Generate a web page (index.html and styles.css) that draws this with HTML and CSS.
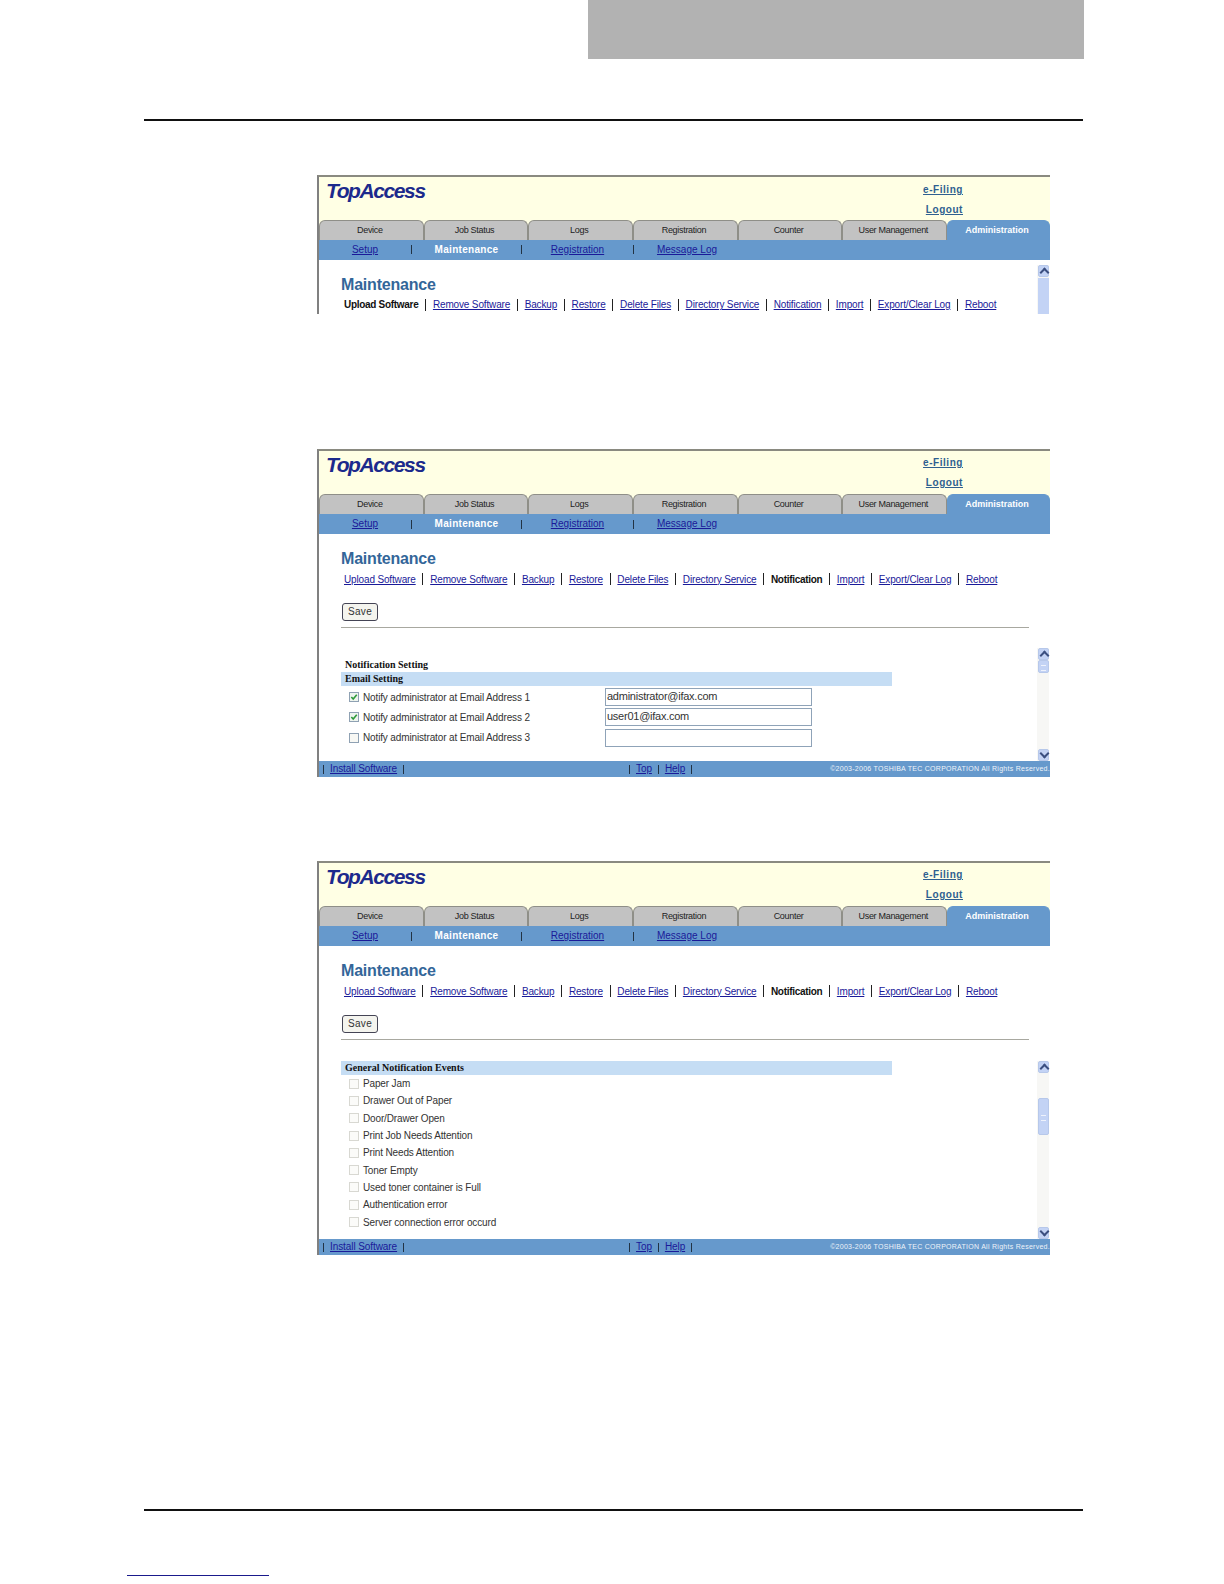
FILE: index.html
```html
<!DOCTYPE html>
<html lang="en">
<head>
<meta charset="utf-8">
<title>TopAccess Maintenance</title>
<link rel="stylesheet" href="styles.css">
</head>
<body>
<div class="page-tab"></div>
<div class="rule rule-top"></div>

<section class="screen screen-a">
  <div class="hdr"><span class="logo">TopAccess</span><div class="hdr-links"><a>e-Filing</a><a>Logout</a></div></div>
  <div class="tabs"><span class="tab">Device</span><span class="tab">Job Status</span><span class="tab">Logs</span><span class="tab">Registration</span><span class="tab">Counter</span><span class="tab">User Management</span><span class="tab tab-on">Administration</span></div>
  <div class="subnav"><a class="c1">Setup</a><i></i><b class="c2">Maintenance</b><i></i><a class="c3">Registration</a><i></i><a class="c4">Message Log</a></div>
  <div class="body body-clip">
    <div class="main">
      <h1>Maintenance</h1>
      <nav class="links"><b>Upload Software</b><i></i><a>Remove Software</a><i></i><a>Backup</a><i></i><a>Restore</a><i></i><a>Delete Files</a><i></i><a>Directory Service</a><i></i><a>Notification</a><i></i><a>Import</a><i></i><a>Export/Clear Log</a><i></i><a>Reboot</a></nav>
    </div>
    <div class="scroll scroll-a"><span class="sb up"></span><span class="track-fill"></span></div>
  </div>
</section>

<section class="screen screen-b">
  <div class="hdr"><span class="logo">TopAccess</span><div class="hdr-links"><a>e-Filing</a><a>Logout</a></div></div>
  <div class="tabs"><span class="tab">Device</span><span class="tab">Job Status</span><span class="tab">Logs</span><span class="tab">Registration</span><span class="tab">Counter</span><span class="tab">User Management</span><span class="tab tab-on">Administration</span></div>
  <div class="subnav"><a class="c1">Setup</a><i></i><b class="c2">Maintenance</b><i></i><a class="c3">Registration</a><i></i><a class="c4">Message Log</a></div>
  <div class="body">
    <div class="main">
      <h1>Maintenance</h1>
      <nav class="links links-alt"><a>Upload Software</a><i></i><a>Remove Software</a><i></i><a>Backup</a><i></i><a>Restore</a><i></i><a>Delete Files</a><i></i><a>Directory Service</a><i></i><b>Notification</b><i></i><a>Import</a><i></i><a>Export/Clear Log</a><i></i><a>Reboot</a></nav>
      <div class="save">Save</div>
      <div class="sep-line"></div>
    </div>
    <div class="pane pane-b">
      <div class="pane-main">
        <div class="caption">Notification Setting</div>
        <div class="band">Email Setting</div>
        <div class="row"><span class="cb on"><svg viewBox="0 0 9 9"><path d="M1.5 4.5 3.6 6.8 7.6 2"/></svg></span><span class="lbl">Notify administrator at Email Address 1</span><span class="field">administrator@ifax.com</span></div>
        <div class="row"><span class="cb on"><svg viewBox="0 0 9 9"><path d="M1.5 4.5 3.6 6.8 7.6 2"/></svg></span><span class="lbl">Notify administrator at Email Address 2</span><span class="field">user01@ifax.com</span></div>
        <div class="row"><span class="cb"></span><span class="lbl">Notify administrator at Email Address 3</span><span class="field"></span></div>
      </div>
      <div class="scroll"><span class="sb up"></span><span class="sb thumb thumb-b"></span><span class="spacer"></span><span class="sb down"></span></div>
    </div>
  </div>
  <div class="foot"><div><i></i><a>Install Software</a><i></i></div><div><i></i><a>Top</a><i></i><a>Help</a><i></i></div><div class="copy">©2003-2006 TOSHIBA TEC CORPORATION All Rights Reserved.</div></div>
</section>

<section class="screen screen-c">
  <div class="hdr"><span class="logo">TopAccess</span><div class="hdr-links"><a>e-Filing</a><a>Logout</a></div></div>
  <div class="tabs"><span class="tab">Device</span><span class="tab">Job Status</span><span class="tab">Logs</span><span class="tab">Registration</span><span class="tab">Counter</span><span class="tab">User Management</span><span class="tab tab-on">Administration</span></div>
  <div class="subnav"><a class="c1">Setup</a><i></i><b class="c2">Maintenance</b><i></i><a class="c3">Registration</a><i></i><a class="c4">Message Log</a></div>
  <div class="body">
    <div class="main">
      <h1>Maintenance</h1>
      <nav class="links links-alt"><a>Upload Software</a><i></i><a>Remove Software</a><i></i><a>Backup</a><i></i><a>Restore</a><i></i><a>Delete Files</a><i></i><a>Directory Service</a><i></i><b>Notification</b><i></i><a>Import</a><i></i><a>Export/Clear Log</a><i></i><a>Reboot</a></nav>
      <div class="save">Save</div>
      <div class="sep-line"></div>
    </div>
    <div class="pane pane-c">
      <div class="pane-main">
        <div class="band">General Notification Events</div>
        <div class="events">
          <div class="ev"><span class="cb dim"></span><span class="lbl">Paper Jam</span></div>
          <div class="ev"><span class="cb dim"></span><span class="lbl">Drawer Out of Paper</span></div>
          <div class="ev"><span class="cb dim"></span><span class="lbl">Door/Drawer Open</span></div>
          <div class="ev"><span class="cb dim"></span><span class="lbl">Print Job Needs Attention</span></div>
          <div class="ev"><span class="cb dim"></span><span class="lbl">Print Needs Attention</span></div>
          <div class="ev"><span class="cb dim"></span><span class="lbl">Toner Empty</span></div>
          <div class="ev"><span class="cb dim"></span><span class="lbl">Used toner container is Full</span></div>
          <div class="ev"><span class="cb dim"></span><span class="lbl">Authentication error</span></div>
          <div class="ev"><span class="cb dim"></span><span class="lbl">Server connection error occurd</span></div>
        </div>
      </div>
      <div class="scroll"><span class="sb up"></span><span class="spacer s1"></span><span class="sb thumb thumb-c"></span><span class="spacer"></span><span class="sb down"></span></div>
    </div>
  </div>
  <div class="foot"><div><i></i><a>Install Software</a><i></i></div><div><i></i><a>Top</a><i></i><a>Help</a><i></i></div><div class="copy">©2003-2006 TOSHIBA TEC CORPORATION All Rights Reserved.</div></div>
</section>

<div class="rule rule-bottom"></div>
<div class="foot-link"></div>
</body>
</html>
```
FILE: styles.css
```css
* { box-sizing: border-box; }
html, body { margin: 0; padding: 0; background: #fff; }
body { font-family: "Liberation Sans", Arial, sans-serif; font-size: 10px; color: #222; height: 1584px; overflow: hidden; }
a { color: #1a1a99; text-decoration: underline; }

.page-tab { margin-left: 588px; width: 496px; height: 59px; background: #b2b2b2; }
.rule { margin-left: 144px; width: 939px; height: 2px; background: #111; }
.rule-top { margin-top: 60px; }
.rule-bottom { margin-top: 254px; }
.foot-link { margin: 64px 0 0 127px; width: 142px; height: 1px; background: #1a1a8c; }

.screen { margin-left: 317px; width: 733px; border-top: 2px solid #8a8a80; border-left: 2px solid #808080; background: #fff; display: flex; flex-direction: column; }
.screen-a { margin-top: 54px; height: 139px; }
.screen-b { margin-top: 135px; height: 328px; }
.screen-c { margin-top: 84px; height: 394px; }

.hdr { height: 43px; background: #ffffe4; display: flex; justify-content: space-between; padding: 1px 0 0 7px; }
.logo { font: italic bold 21px/25px "Liberation Sans", Arial, sans-serif; letter-spacing: -1.4px; color: #1c2a8c; }
.hdr-links { width: 643px; display: flex; flex-direction: column; align-items: flex-end; padding: 5px 0 0; margin-right: 87px; gap: 6px; }
.screen-b .hdr-links, .screen-c .hdr-links { padding-top: 4px; }
.hdr-links a { color: #2f5f90; font-weight: bold; font-size: 10px; line-height: 14px; letter-spacing: .55px; }

.tabs { height: 20px; display: flex; background: #ffffe4; }
.tab { flex: 0 0 104.7px; height: 20px; background: #c2c2c2; border: 1px solid #8f8f88; border-bottom: 0; border-radius: 6px 6px 0 0; font-size: 9px; letter-spacing: -.3px; line-height: 18px; text-align: center; color: #222; padding-right: 3px; }
.tab-on { flex: 1 1 auto; background: #6699cc; border-color: #6699cc; color: #fff; font-weight: bold; letter-spacing: 0; }

.subnav { height: 20px; background: #6699cc; display: flex; align-items: center; line-height: 20px; }
.subnav i { flex: 0 0 1px; height: 9px; background: #234; }
.subnav a, .subnav b { text-align: center; }
.subnav b { color: #fff; letter-spacing: .3px; }
.c1 { flex: 0 0 92px; }
.c2 { flex: 0 0 109px; }
.c3 { flex: 0 0 111px; }
.c4 { flex: 0 0 106px; }

.body { flex: 1 1 auto; min-height: 0; display: flex; flex-direction: column; }
.body-clip { flex-direction: row; justify-content: space-between; overflow: hidden; }
.main { padding: 15px 0 0 22px; width: 710px; flex: none; }
h1 { margin: 0; font-size: 16px; letter-spacing: -.2px; line-height: 20px; font-weight: bold; color: #336699; }
.links { display: flex; align-items: center; height: 20px; gap: 6.75px; padding-left: 3px; white-space: nowrap; letter-spacing: -.15px; }
.links i { width: 1px; height: 12px; background: #222; flex: none; }
.links b { color: #111; letter-spacing: -.3px; }

.save { margin-top: 14px; width: 36px; height: 18px; border: 1px solid #445; border-radius: 3px; background: #f4f4ee; font-size: 10px; line-height: 16px; text-align: center; color: #333; margin-left: 1px; letter-spacing: .3px; }
.sep-line { margin-top: 6px; width: 688px; height: 1px; background: #a8a8a0; }

.pane { display: flex; justify-content: space-between; margin-top: auto; }
.pane-b { height: 113px; }
.pane-c { height: 178px; }
.pane-main { padding-left: 22px; width: 710px; }
.pane-b .pane-main { padding-top: 10px; }
.caption { font: bold 10px/14px "Liberation Serif", "Times New Roman", serif; color: #111; padding-left: 4px; }
.band { width: 551px; height: 14px; background: #c5ddf4; font: bold 10px/14px "Liberation Serif", "Times New Roman", serif; color: #111; padding-left: 4px; }
.row { height: 20.3px; display: flex; align-items: center; padding-left: 8px; }
.band + .row { margin-top: 1px; }
.ev { height: 17.3px; display: flex; align-items: center; padding-left: 8px; }
.cb { flex: none; width: 10px; height: 10px; border: 1px solid #8fa1b3; background: #f8f8f4; display: block; }
.cb svg { display: block; width: 8px; height: 8px; fill: none; stroke: #2f9a3a; stroke-width: 1.8; }
.cb.on { background: #eef4ee; }
.cb.dim { border-color: #d8d8d2; background: #fbfbf9; }
.lbl { margin-left: 4px; color: #333; white-space: nowrap; letter-spacing: -.14px; }
.row .lbl { flex: 0 0 242px; }
.field { flex: none; width: 207px; height: 18px; border: 1px solid #8fa3b8; background: #fff; font-size: 11px; letter-spacing: -.25px; line-height: 15px; padding-left: 1px; color: #333; }

.scroll { flex: none; width: 12px; margin-right: 1px; display: flex; flex-direction: column; align-items: flex-end; background: #f7f7f5; }
.scroll-a { height: 100%; margin-top: 5px; }
.sb { display: block; flex: none; width: 11px; background: #c3d3f5; border: 1px solid #b7c8ea; border-radius: 2px; position: relative; }
.up, .down { height: 12px; }
.up::after, .down::after { content: ""; position: absolute; left: 2px; width: 5px; height: 5px; border-left: 2px solid #3b4f80; border-top: 2px solid #3b4f80; transform: rotate(45deg); top: 3px; }
.down::after { transform: rotate(225deg); top: 0; }
.thumb-b { height: 13px; }
.thumb-c { height: 37px; }
.thumb::after { content: ""; position: absolute; left: 2px; right: 2px; top: 50%; height: 4px; margin-top: -2px; border-top: 1px solid #eef2fc; border-bottom: 1px solid #eef2fc; }
.spacer { flex: 1 1 auto; }
.s1 { flex: 0 0 25px; }
.track-fill { flex: 1 1 auto; background: #c3d3f5; width: 11px; margin-top: 1px; }

.foot { flex: none; height: 16px; background: #6699cc; display: grid; grid-template-columns: 306px 207px 1fr; align-items: center; padding-left: 4px; line-height: 16px; letter-spacing: -.08px; }
.foot > div { display: flex; align-items: center; gap: 6px; white-space: nowrap; }
.foot i { width: 1px; height: 9px; background: #234; flex: none; }
.foot .copy { justify-content: flex-end; color: #eef3f9; font-size: 7px; letter-spacing: .27px; margin-left: -20px; }
```
